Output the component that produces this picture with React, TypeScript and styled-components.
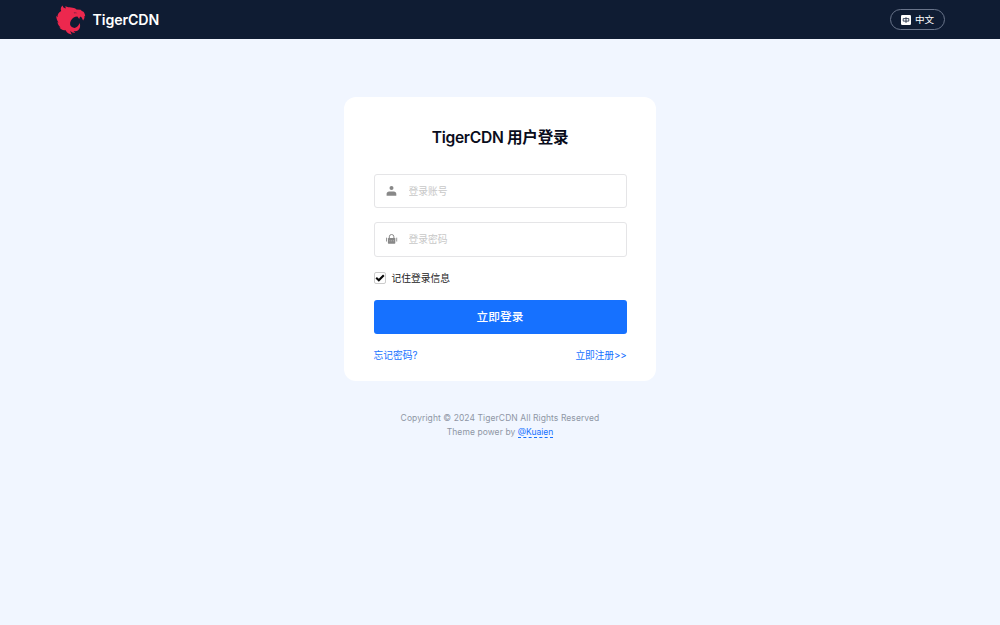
import React from "react";
import styled, { createGlobalStyle } from "styled-components";

const GlobalStyle = createGlobalStyle`
  * { box-sizing: border-box; }
  body {
    margin: 0;
    min-height: 100vh;
    background: #f1f6ff;
    color: #0a0d1c;
    font-family: Inter, "Noto Sans CJK SC", sans-serif;
  }
`;

const Header = styled.header`
  height: 39px;
  padding: 0 55.5px;
  display: flex;
  align-items: center;
  justify-content: space-between;
  background: #0f1c33;
`;

const Brand = styled.div`
  display: flex;
  align-items: center;
  gap: 7px;
  color: #fff;
  font-size: 14.2px;
  font-weight: 600;
  line-height: 20px;
  letter-spacing: -0.1px;
`;

const LanguageButton = styled.button`
  width: 55px;
  height: 21px;
  padding: 0 0 0 1px;
  display: flex;
  align-items: center;
  justify-content: center;
  gap: 4px;
  border: 1px solid #69748a;
  border-radius: 11px;
  background: transparent;
  color: #fff;
  font: 400 9.6px/18px Inter, "Noto Sans CJK SC", sans-serif;
`;

const Main = styled.main`
  padding-top: 58px;
  display: flex;
  flex-direction: column;
  align-items: center;
`;

const Card = styled.form`
  width: 312px;
  height: 284px;
  padding: 30px 29.5px 0;
  border-radius: 12px;
  background: #fff;
`;

const Title = styled.h1`
  margin: 0 0 25.5px;
  font-size: 15.6px;
  line-height: 21px;
  font-weight: 600;
  letter-spacing: -0.3px;
  text-align: center;
`;

const Field = styled.label`
  height: 34.5px;
  margin-bottom: 14px;
  padding-left: 11px;
  display: flex;
  align-items: center;
  gap: 11px;
  border: 1px solid #e5e5e7;
  border-radius: 3px;
`;

const Input = styled.input`
  flex: 1;
  min-width: 0;
  padding: 2px 0 0;
  border: 0;
  outline: 0;
  background: transparent;
  font: 400 9.75px/18px Inter, "Noto Sans CJK SC", sans-serif;
  &::placeholder { color: #c8c8c8; opacity: 1; }
`;

const Remember = styled.div`
  height: 14px;
  display: flex;
  align-items: center;
  gap: 6px;
  color: #222;
  font-size: 9.75px;
  line-height: 14px;
`;

const RememberText = styled.span`
  padding-top: 2px;
`;

const CheckBox = styled.span`
  width: 12px;
  height: 12px;
  display: flex;
  border: 1px solid #cbcbcb;
  border-radius: 2px;
`;

const Submit = styled.button`
  width: 100%;
  height: 34px;
  margin-top: 15px;
  padding: 0;
  border: 0;
  border-radius: 3px;
  background: #1671ff;
  color: #fff;
  font: 500 11.7px/34px Inter, "Noto Sans CJK SC", sans-serif;
`;

const Links = styled.div`
  margin-top: 14px;
  display: flex;
  justify-content: space-between;
  font-size: 9.75px;
  line-height: 16px;
`;

const TextLink = styled.a`
  color: #1671ff;
`;

const RegisterLink = styled(TextLink)`
  letter-spacing: -0.15px;
`;

const Footer = styled.footer`
  margin-top: 30px;
  color: #8f97a5;
  font-size: 8.5px;
  line-height: 14px;
  letter-spacing: 0.08px;
  text-align: center;
`;

const CreditLink = styled(TextLink)`
  border-bottom: 1px dashed #1671ff;
  letter-spacing: 0;
`;

const TigerLogo = () => (
  <svg width="30" height="30" viewBox="0 0 30 30" fill="#ec284e">
    <path d="M5.2 6C4.2 3.8 5 1.7 6.8.5C6.8 2.2 7.8 3.1 9.8 3.5L9.3 1.3C11.4 2.3 13.3 2.4 15 2.5C17.2 2.5 19 3.2 20.5 4.4L24.6 4.7C25.3 5.5 26.3 6.2 27.5 6.8C28.6 8.2 29.1 9.6 29.2 11.2L28 11.6 28.6 12.8 27.1 15.5 25.7 12.6 24.1 11.4 23.2 13.9 21.4 11.6C18.8 11.5 16.5 13 15.1 15.2C13.4 18 13.8 20.7 15.8 22.1C18.7 24 22.2 22.4 23.6 18.1C24.7 20.7 24.1 23.7 22.2 25.2C20.8 26.2 19.2 26.5 17.5 25.9L19.2 28.1C17 28 15.4 27.2 14.4 25.8C14.5 27.4 15 28.5 16.1 29.5C13 29.3 10.7 27.7 9.7 25.3C7.4 25.3 4.9 24.5 3.3 22.5L4.6 22.4C2.8 21 1.8 19.1 1.4 17.1L2.6 17.7C1 15.6.2 13.2.3 10.8L1.6 12.3C1.2 9.7 2.5 7.5 5.2 6Z" />
    <path d="M17.7 7.3c1.4-.4 2.6 0 3.7 1-1.4-.2-2.4-.1-3.2.2Z" fill="#8c2144" />
  </svg>
);

const LanguageIcon = () => (
  <svg width="10" height="10" viewBox="0 0 10 10">
    <rect width="10" height="10" rx="1.2" fill="#fff" />
    <path d="M2.2 3.6h5.6v2.5H2.2ZM5 2.2v5.7" fill="none" stroke="#26334b" strokeWidth=".9" />
  </svg>
);

const UserIcon = () => (
  <svg width="12" height="12" viewBox="0 0 12 12" fill="#888">
    <circle cx="5.5" cy="3" r="2" />
    <path d="M.6 10.8V8.9c0-1.5 1-2.4 2.5-2.4h4.7c1.5 0 2.5.9 2.5 2.4v1.9Z" />
  </svg>
);

const LockIcon = () => (
  <svg width="12" height="12" viewBox="0 0 12 12" fill="#888">
    <path d="M3.3 5.2V3.8a2.3 2.3 0 0 1 4.6 0v1.4" fill="none" stroke="#888" strokeWidth="1" />
    <rect x="1.9" y="4.9" width="7.4" height="5.9" rx=".7" />
    <path d="M.5 4.7v3.8M10.7 4.7v3.8" stroke="#999" strokeWidth="1" />
    <path d="M3.8 7.3v1M5.6 7.3v1M7.4 7.3v1" stroke="#ccc" strokeWidth=".7" />
  </svg>
);

const CheckMark = () => (
  <svg width="10" height="10" viewBox="0 0 10 10" fill="none" stroke="#080808" strokeWidth="2.1">
    <path d="m1.2 4.8 2.6 2.4 5-5" />
  </svg>
);

export default function App() {
  return (
    <>
      <GlobalStyle />
      <Header>
        <Brand><TigerLogo />TigerCDN</Brand>
        <LanguageButton type="button"><LanguageIcon />中文</LanguageButton>
      </Header>
      <Main>
        <Card>
          <Title>TigerCDN 用户登录</Title>
          <Field><UserIcon /><Input placeholder="登录账号" /></Field>
          <Field><LockIcon /><Input type="password" placeholder="登录密码" /></Field>
          <Remember><CheckBox role="checkbox" aria-checked="true"><CheckMark /></CheckBox><RememberText>记住登录信息</RememberText></Remember>
          <Submit type="button">立即登录</Submit>
          <Links><TextLink>忘记密码?</TextLink><RegisterLink>立即注册&gt;&gt;</RegisterLink></Links>
        </Card>
        <Footer>
          Copyright © 2024 TigerCDN All Rights Reserved<br />
          Theme power by <CreditLink>@Kuaien</CreditLink>
        </Footer>
      </Main>
    </>
  );
}
